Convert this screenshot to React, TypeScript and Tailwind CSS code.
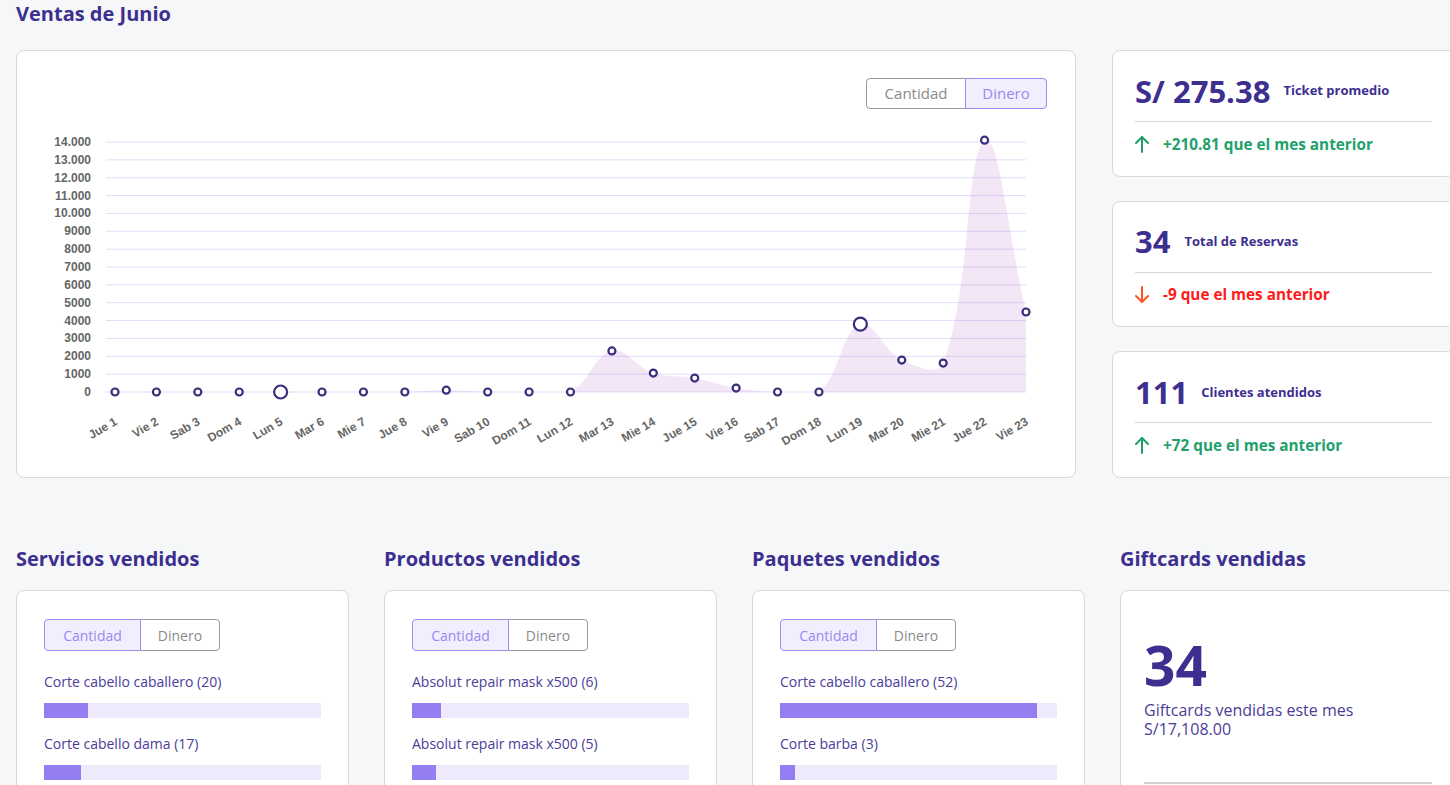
import React from "react";

const FONT = { fontFamily: "'Open Sans', Lato, sans-serif" };

const labels = [
  "Jue 1", "Vie 2", "Sab 3", "Dom 4", "Lun 5", "Mar 6", "Mie 7", "Jue 8", "Vie 9", "Sab 10", "Dom 11", "Lun 12",
  "Mar 13", "Mie 14", "Jue 15", "Vie 16", "Sab 17", "Dom 18", "Lun 19", "Mar 20", "Mie 21", "Jue 22", "Vie 23",
];
const values = [0, 0, 0, 0, 0, 0, 0, 0, 100, 0, 0, 0, 2300, 1060, 780, 220, 0, 0, 3800, 1790, 1620, 14100, 4480];

const X0 = 98;
const STEP = 911 / 22;
const ZERO = 283;
const SCALE = 250 / 14000;

function pts() {
  return values.map((v, i) => ({ x: X0 + i * STEP, y: ZERO - v * SCALE }));
}

function areaPath() {
  const p = pts();
  const t = 0.4;
  const cps = p.map((cur, i) => {
    const prev = p[i - 1] || cur;
    const next = p[i + 1] || cur;
    const d01 = Math.hypot(cur.x - prev.x, cur.y - prev.y);
    const d12 = Math.hypot(next.x - cur.x, next.y - cur.y);
    let s01 = d01 / (d01 + d12);
    let s12 = d12 / (d01 + d12);
    if (isNaN(s01)) s01 = 0;
    if (isNaN(s12)) s12 = 0;
    const fa = t * s01;
    const fb = t * s12;
    return {
      p: { x: cur.x - fa * (next.x - prev.x), y: cur.y - fa * (next.y - prev.y) },
      n: { x: cur.x + fb * (next.x - prev.x), y: cur.y + fb * (next.y - prev.y) },
    };
  });
  let d = `M ${p[0].x} ${ZERO} L ${p[0].x} ${p[0].y}`;
  for (let i = 1; i < p.length; i++) {
    const c1 = cps[i - 1].n;
    const c2 = cps[i].p;
    d += ` C ${c1.x} ${Math.min(c1.y, ZERO)} ${c2.x} ${Math.min(c2.y, ZERO)} ${p[i].x} ${p[i].y}`;
  }
  d += ` L ${p[p.length - 1].x} ${ZERO} Z`;
  return d;
}

function Chart() {
  const p = pts();
  const ticks = Array.from({ length: 15 }, (_, i) => i * 1000);
  const fmt = (v: number) => (v >= 10000 ? `${Math.floor(v / 1000)}.000` : `${v}`);
  return (
    <svg width={1058} height={360} className="block">
      {ticks.map((v) => {
        const y = ZERO - v * SCALE;
        return (
          <g key={v}>
            <line x1={89} x2={1009} y1={y} y2={y} stroke="#e2ddf9" strokeWidth={1} />
            <text
              x={74}
              y={y + 4}
              textAnchor="end"
              fontSize={12}
              fontWeight={700}
              fill="#666"
              fontFamily="'Liberation Sans', Arial, sans-serif"
            >
              {fmt(v)}
            </text>
          </g>
        );
      })}
      <path d={areaPath()} fill="rgba(186,104,200,0.17)" />
      {p.map((pt, i) => (
        <circle
          key={i}
          cx={pt.x}
          cy={pt.y}
          r={i === 4 || i === 18 ? 6.5 : 3.5}
          fill="#fff"
          stroke="#3b2d7e"
          strokeWidth={2.2}
        />
      ))}
      {p.map((pt, i) => (
        <text
          key={labels[i]}
          x={pt.x + 3}
          y={315}
          textAnchor="end"
          fontSize={12}
          fontWeight={700}
          fill="#666"
          fontFamily="'Liberation Sans', Arial, sans-serif"
          transform={`rotate(-30 ${pt.x + 3} 315)`}
        >
          {labels[i]}
        </text>
      ))}
    </svg>
  );
}

function Toggle({
  active,
  h,
  w1,
  w2,
  size,
}: {
  active: 0 | 1;
  h: string;
  w1: string;
  w2: string;
  size: string;
}) {
  const on = "bg-[#f1effe] border-[#9d8bf1] text-[#9a88f4] z-10";
  const off = "bg-white border-[#9a9a9a] text-[#8a8a8a]";
  return (
    <div className={`flex ${h} ${size}`}>
      <div className={`relative flex items-center justify-center border rounded-l-[4px] ${w1} ${active === 0 ? on : off}`}>
        Cantidad
      </div>
      <div className={`relative -ml-px flex items-center justify-center border rounded-r-[4px] ${w2} ${active === 1 ? on : off}`}>
        Dinero
      </div>
    </div>
  );
}

function ArrowUp({ color }: { color: string }) {
  return (
    <svg width="14" height="18" viewBox="0 0 14 18" fill="none" stroke={color} strokeWidth={2} strokeLinecap="round" strokeLinejoin="round">
      <path d="M7 17V2" />
      <path d="M1 8l6-6 6 6" />
    </svg>
  );
}
function ArrowDown({ color }: { color: string }) {
  return (
    <svg width="14" height="18" viewBox="0 0 14 18" fill="none" stroke={color} strokeWidth={2} strokeLinecap="round" strokeLinejoin="round">
      <path d="M7 1v15" />
      <path d="M1 10l6 6 6-6" />
    </svg>
  );
}

function StatCard({
  value,
  label,
  delta,
  up,
  gap,
}: {
  value: string;
  label: string;
  delta: string;
  up: boolean;
  gap: string;
}) {
  return (
    <div className="flex-1 bg-white border border-[#d9d9d9] rounded-[8px] px-[22px] pt-[20px]">
      <div className="flex items-center h-[40px] pr-[1px]">
        <span className="text-[31px] font-bold text-[#3c2f8f] leading-none">{value}</span>
        <span className={`text-[13px] font-bold text-[#3c2f8f] ${gap}`}>{label}</span>
      </div>
      <div className="mt-[10px] h-px bg-[#d6d6d6] w-[297px]" />
      <div className="flex items-center mt-[12px] h-[20px]">
        {up ? <ArrowUp color="#1f9e6c" /> : <ArrowDown color="#ff5321" />}
        <span className={`ml-[14px] text-[15.3px] font-bold ${up ? "text-[#23a06c]" : "text-[#ff1b1b]"}`}>{delta}</span>
      </div>
    </div>
  );
}

function BarItem({ label, pct, first }: { label: string; pct: number; first?: boolean }) {
  return (
    <div className="flex flex-col">
      <div className={`${first ? "mt-[21px]" : "mt-[16px]"} h-[20px] text-[14px] leading-[20px] text-[#4a3d98]`}>{label}</div>
      <div className="mt-[11px] h-[15px] bg-[#eeeafb] w-[277px]">
        <div className="h-full bg-[#957ef2]" style={{ width: `${pct}px` }} />
      </div>
    </div>
  );
}

function ListCard({ title, items }: { title: string; items: { label: string; px: number }[] }) {
  return (
    <div className="w-[333px] shrink-0">
      <h2 className="text-[20px] leading-[28px] font-bold text-[#3c2f8f]">{title}</h2>
      <div className="mt-[17px] h-[260px] flex flex-col bg-white border border-[#d9d9d9] rounded-[8px] px-[27px] pt-[28px]">
        <Toggle active={0} h="h-[32px]" w1="w-[97px]" w2="w-[80px]" size="text-[14px]" />
        {items.map((it, i) => (
          <BarItem key={it.label} label={it.label} pct={it.px} first={i === 0} />
        ))}
      </div>
    </div>
  );
}

export default function App() {
  return (
    <div className="w-full h-[785px] overflow-hidden bg-[#f6f7f9]" style={FONT}>
      <div className="w-[1470px] px-4">
        <h1 className="text-[20px] leading-[28px] font-bold text-[#3c2f8f]">Ventas de Junio</h1>
        <div className="mt-[22px] flex gap-[36px]">
          <div className="w-[1060px] h-[428px] bg-white border border-[#d9d9d9] rounded-[8px] pt-[27px]">
            <div className="flex justify-end pr-[28px]">
              <Toggle active={1} h="h-[31px]" w1="w-[100px]" w2="w-[82px]" size="text-[15px]" />
            </div>
            <Chart />
          </div>
          <div className="w-[343px] h-[428px] flex flex-col gap-[24px]">
            <StatCard value="S/ 275.38" label="Ticket promedio" delta="+210.81 que el mes anterior" up gap="ml-[13px]" />
            <StatCard value="34" label="Total de Reservas" delta="-9 que el mes anterior" up={false} gap="ml-[14px]" />
            <StatCard value="111" label="Clientes atendidos" delta="+72 que el mes anterior" up gap="ml-[13px]" />
          </div>
        </div>
        <div className="mt-[67px] flex gap-[35px]">
          <ListCard
            title="Servicios vendidos"
            items={[
              { label: "Corte cabello caballero (20)", px: 44 },
              { label: "Corte cabello dama (17)", px: 37 },
            ]}
          />
          <ListCard
            title="Productos vendidos"
            items={[
              { label: "Absolut repair mask x500 (6)", px: 29 },
              { label: "Absolut repair mask x500 (5)", px: 24 },
            ]}
          />
          <ListCard
            title="Paquetes vendidos"
            items={[
              { label: "Corte cabello caballero (52)", px: 257 },
              { label: "Corte barba (3)", px: 15 },
            ]}
          />
          <div className="w-[333px] shrink-0">
            <h2 className="text-[20px] leading-[28px] font-bold text-[#3c2f8f]">Giftcards vendidas</h2>
            <div className="mt-[17px] h-[260px] bg-white border border-[#d9d9d9] rounded-[8px] px-[23px] pt-[46px]">
              <div className="text-[55px] leading-[56px] font-bold text-[#3c2f8f]">34</div>
              <div className="mt-[8px] text-[16px] leading-[19px] text-[#4a3d98]">
                <div>Giftcards vendidas este mes</div>
                <div>S/17,108.00</div>
              </div>
              <div className="mt-[43px] h-[2px] bg-[#cfcfcf] w-[288px]" />
            </div>
          </div>
        </div>
      </div>
    </div>
  );
}
